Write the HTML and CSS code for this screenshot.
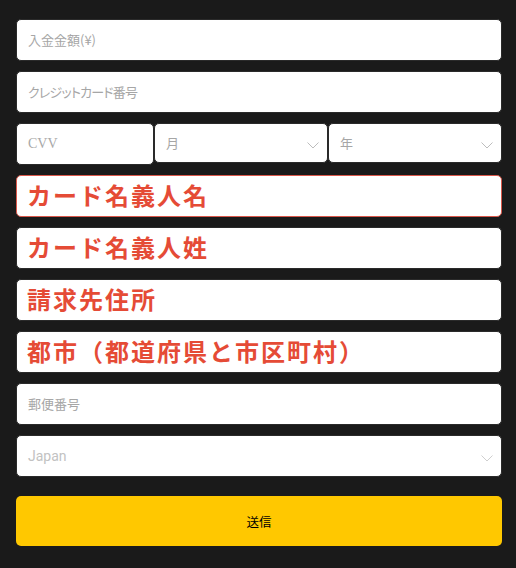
FILE: index.html
```html
<!DOCTYPE html>
<html lang="ja">
<head>
<meta charset="utf-8">
<title>入金</title>
<link rel="stylesheet" href="styles.css">
</head>
<body>
<form class="form">
  <div class="field"><span class="ph">入金金額(¥)</span></div>
  <div class="field"><span class="ph ph-kana">クレジットカード番号</span></div>
  <div class="row3">
    <div class="field"><span class="ph ph-serif">CVV</span></div>
    <div class="field select short"><span class="ph">月</span><svg class="chev" width="12" height="7" viewBox="0 0 12 7"><polyline points="0.5,0.5 6,6 11.5,0.5" fill="none" stroke="#bdbdbd" stroke-width="1"/></svg></div>
    <div class="field select short"><span class="ph">年</span><svg class="chev" width="12" height="7" viewBox="0 0 12 7"><polyline points="0.5,0.5 6,6 11.5,0.5" fill="none" stroke="#bdbdbd" stroke-width="1"/></svg></div>
  </div>
  <div class="field error"><span class="big">カード名義人名</span></div>
  <div class="field"><span class="big">カード名義人姓</span></div>
  <div class="field"><span class="big">請求先住所</span></div>
  <div class="field"><span class="big">都市（都道府県と市区町村）</span></div>
  <div class="field"><span class="ph">郵便番号</span></div>
  <div class="field select"><span class="ph ph-latin">Japan</span><svg class="chev" width="12" height="7" viewBox="0 0 12 7"><polyline points="0.5,0.5 6,6 11.5,0.5" fill="none" stroke="#cfcfcf" stroke-width="1"/></svg></div>
  <div class="submit">送信</div>
</form>
</body>
</html>
```

FILE: styles.css
```css
html, body {
  margin: 0;
  padding: 0;
  background: #1a1a1a;
}

body {
  width: 516px;
  height: 568px;
  font-family: "Noto Sans CJK JP", "Noto Sans", sans-serif;
}

.form {
  display: flex;
  flex-direction: column;
  gap: 10px;
  padding: 19px 14px 0 16px;
  width: 486px;
}

.field {
  box-sizing: border-box;
  height: 42px;
  background: #ffffff;
  border: 1px solid #2a2a2a;
  border-radius: 5px;
  display: flex;
  align-items: center;
  padding: 0 10px 0 11px;
  overflow: hidden;
}

.field.error {
  border-color: #d9574a;
}

.field.select {
  justify-content: space-between;
  padding-right: 8px;
}

.field.short {
  height: 40px;
}

.row3 {
  display: grid;
  grid-template-columns: 138px 174px 174px;
  align-items: start;
}

.ph {
  font-size: 13px;
  color: #a6a6a6;
  line-height: 1;
  margin-top: -1px;
}

.ph-kana {
  font-feature-settings: "palt" 1;
  letter-spacing: -0.8px;
}

.ph-serif {
  font-family: "Liberation Serif", serif;
  font-size: 14px;
  color: #a9a9a9;
}

.ph-latin {
  font-family: Roboto, "Liberation Sans", sans-serif;
  font-size: 14px;
  color: #c2c2c2;
  margin-top: 0;
}

.chev {
  display: block;
  margin-top: 5px;
}

.big {
  font-size: 24px;
  font-weight: 700;
  color: #e54b36;
  letter-spacing: 2px;
  line-height: 1;
  margin-left: -1px;
  margin-top: -2px;
}

.submit {
  margin-top: 9px;
  height: 50px;
  background: #ffc800;
  border-radius: 5px;
  display: flex;
  align-items: center;
  justify-content: center;
  font-size: 12.5px;
  color: #000000;
}
```
